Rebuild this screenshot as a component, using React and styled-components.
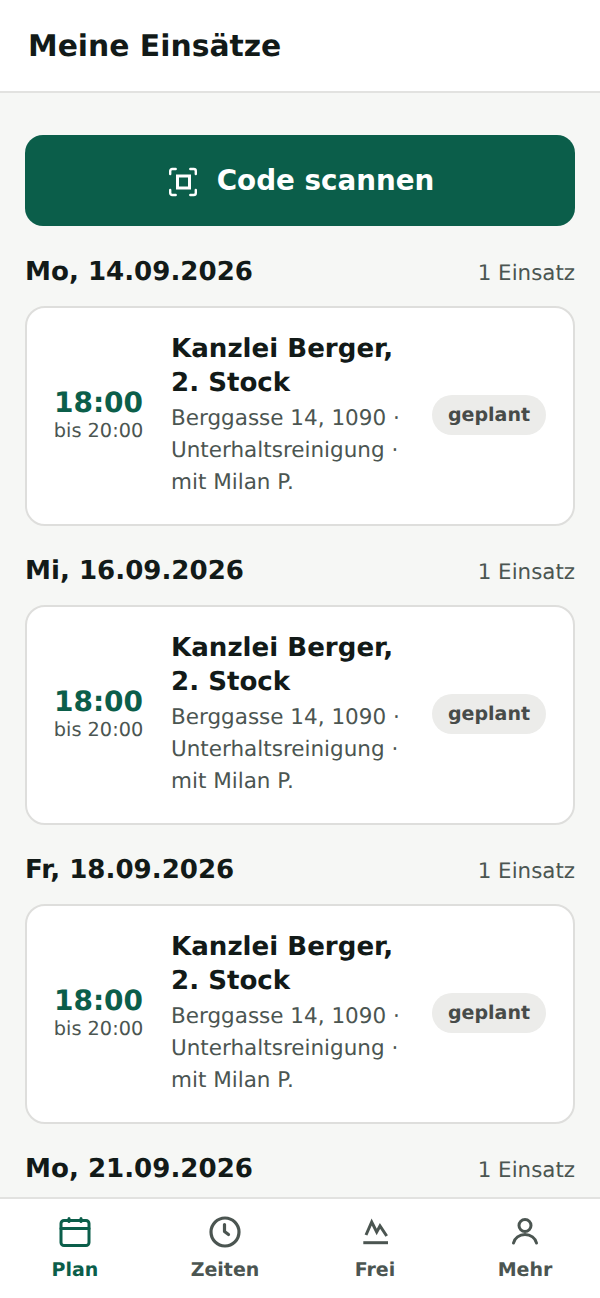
import React from "react";
import styled, { createGlobalStyle } from "styled-components";

const Global = createGlobalStyle`
  html, body { margin: 0; padding: 0; height: 100%; overflow: hidden; }
  body { font-family: "DejaVu Sans", sans-serif; background: #f6f7f5; text-rendering: geometricPrecision; }
  * { box-sizing: border-box; }
`;
const Page = styled.div`
  width: 600px; height: 1298px; display: flex; flex-direction: column; overflow: hidden; background: #f6f7f5;
`;
const Header = styled.header`
  height: 93px; flex: none; background: #fff; border-bottom: 2px solid #e2e2e0;
  display: flex; align-items: center; padding: 2px 28px 0;
`;
const Title = styled.h1`
  margin: 0; font-size: 29.8px; line-height: 36px; font-weight: 700; color: #121a18;
`;
const Main = styled.main`
  flex: 1; min-height: 0; overflow: hidden; padding: 42px 25px 0; display: flex; flex-direction: column;
`;
const ScanButton = styled.button`
  flex: none; height: 91px; border: 0; border-radius: 18px; background: #0b5e4a; color: #fff;
  display: flex; align-items: center; justify-content: center; gap: 19px;
  font: 700 27.75px/34px "DejaVu Sans", sans-serif; padding: 0; margin-bottom: 26px;
`;
const DateRow = styled.div`
  flex: none; display: flex; justify-content: space-between; align-items: center; height: 38px; margin-bottom: 16px; padding-top: 2px;
`;
const DateText = styled.h2`
  margin: 0; font-size: 26.1px; line-height: 32px; font-weight: 700; color: #121a18;
`;
const Count = styled.span`
  font-size: 21.4px; color: #4b5551; padding-top: 2px;
`;
const Card = styled.article`
  flex: none; height: 220px; background: #fff; border: 2px solid #dededc; border-radius: 20px;
  display: flex; align-items: center; padding: 0 27px 2px; margin-bottom: 25px;
`;
const TimeCol = styled.div`
  width: 89px; flex: none; display: flex; flex-direction: column; align-items: center; margin-right: 28px;
`;
const Time = styled.div`
  font-size: 28px; line-height: 32px; font-weight: 700; color: #0b5e4a;
`;
const Until = styled.div`
  font-size: 19.3px; line-height: 24px; color: #4b5551; white-space: nowrap;
`;
const Body = styled.div`
  flex: 1; min-width: 0;
`;
const CardTitle = styled.h3`
  margin: 0 0 3px; font-size: 26.1px; line-height: 34px; font-weight: 700; color: #121a18;
`;
const Meta = styled.p`
  margin: 0; font-size: 21.5px; line-height: 32px; color: #4b5551;
`;
const Badge = styled.span`
  flex: none; height: 40px; padding: 0 16px; border-radius: 20px; background: #ececea; color: #474b49;
  display: flex; align-items: center; font-size: 19px; font-weight: 700;
`;
const Nav = styled.nav`
  flex: none; height: 101px; background: #fff; border-top: 2px solid #e2e2e0;
  display: grid; grid-template-columns: repeat(4, 1fr);
`;
const Tab = styled.div`
  display: flex; flex-direction: column; align-items: center; padding-top: 16px;
  color: ${(p) => (p.$active ? "#0b5e4a" : "#4b5551")};
`;
const TabLabel = styled.span`
  font: 700 19px/24px "DejaVu Sans", sans-serif; margin-top: 9px;
`;
const Icon = styled.svg`
  display: block; flex: none; fill: none; stroke: currentColor; stroke-linecap: round; stroke-linejoin: round;
`;

const ScanIcon = () => (
  <Icon width="32" height="32" viewBox="0 0 32 32" strokeWidth="2.4">
    <path d="M4.2 9V6a2 2 0 0 1 2-2h3.5M24.3 4h3.5a2 2 0 0 1 2 2v3M29.8 25v3a2 2 0 0 1-2 2h-3.5M9.7 30H6.2a2 2 0 0 1-2-2v-3" />
    <rect x="11.5" y="11" width="12" height="12" strokeLinejoin="miter" strokeWidth="3" />
  </Icon>
);
const CalendarIcon = () => (
  <Icon width="34" height="34" viewBox="0 0 34 34" strokeWidth="3">
    <rect x="3" y="5.5" width="28" height="25" rx="3" />
    <path d="M3 13.5h28M11 3.5v3M23 3.500v3" />
  </Icon>
);
const ClockIcon = () => (
  <Icon width="34" height="34" viewBox="0 0 34 34" strokeWidth="3.2">
    <circle cx="17" cy="17" r="14" />
    <path d="M16.5 9.500v7l4 3" />
  </Icon>
);
const MountainIcon = () => (
  <Icon width="34" height="34" viewBox="0 0 34 34" strokeWidth="3">
    <path d="M8 20l5.7-13 5 10 3.300-6 6.700 10" strokeLinecap="butt" strokeLinejoin="miter" />
    <path d="M5.300 27.700h24.700" strokeLinecap="butt" />
  </Icon>
);
const UserIcon = () => (
  <Icon width="34" height="34" viewBox="0 0 34 34" strokeWidth="3">
    <circle cx="17" cy="10.5" r="6" />
    <path d="M5.500 28c1-5 6-8.500 11.500-8.500s10.500 3.500 11.500 8.500" />
  </Icon>
);

const days = [
  { date: "Mo, 14.09.2026", visible: true },
  { date: "Mi, 16.09.2026", visible: true },
  { date: "Fr, 18.09.2026", visible: true },
  { date: "Mo, 21.09.2026", visible: false },
];
const tabs = [
  { label: "Plan", icon: <CalendarIcon />, active: true },
  { label: "Zeiten", icon: <ClockIcon /> },
  { label: "Frei", icon: <MountainIcon /> },
  { label: "Mehr", icon: <UserIcon /> },
];

export default function App() {
  return (
    <Page>
      <Global />
      <Header><Title>Meine Einsätze</Title></Header>
      <Main>
        <ScanButton><ScanIcon />Code scannen</ScanButton>
        {days.map((d) => (
          <React.Fragment key={d.date}>
            <DateRow><DateText>{d.date}</DateText><Count>1 Einsatz</Count></DateRow>
            {d.visible && (
              <Card>
                <TimeCol><Time>18:00</Time><Until>bis 20:00</Until></TimeCol>
                <Body>
                  <CardTitle>Kanzlei Berger,<br />2. Stock</CardTitle>
                  <Meta>Berggasse 14, 1090 ·<br />Unterhaltsreinigung ·<br />mit Milan P.</Meta>
                </Body>
                <Badge>geplant</Badge>
              </Card>
            )}
          </React.Fragment>
        ))}
      </Main>
      <Nav>
        {tabs.map((t) => (
          <Tab key={t.label} $active={t.active}>{t.icon}<TabLabel>{t.label}</TabLabel></Tab>
        ))}
      </Nav>
    </Page>
  );
}
